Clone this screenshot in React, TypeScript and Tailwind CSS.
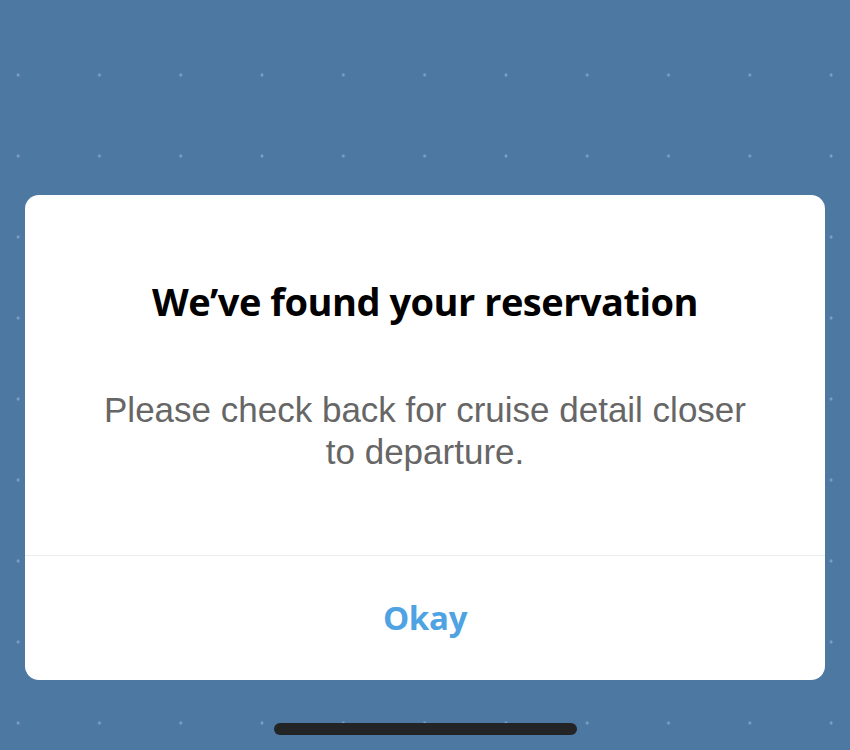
export default function App() {
  return (
    <div className="w-[850px] h-[750px] overflow-hidden bg-[#4d78a2] bg-[radial-gradient(circle,#7d9fc2_1.3px,transparent_1.8px)] bg-[length:81.3px_81px] bg-[position:-22.5px_34.5px] flex flex-col items-center pt-[195px]">
      <div className="w-[800px] h-[485px] bg-white rounded-[14px] flex flex-col overflow-hidden">
        <div className="h-[361px] flex flex-col items-center pt-[83px] border-b border-[#ececec]">
          <h1 className="font-['Open_Sans',sans-serif] font-bold text-[38px] leading-[46px] text-black tracking-[-0.5px]">
            We’ve found your reservation
          </h1>
          <p className="mt-[65px] font-['Liberation_Sans',sans-serif] text-[35px] leading-[42px] text-[#666666] text-center w-[720px]">
            Please check back for cruise detail closer
            <br />
            to departure.
          </p>
        </div>
        <button className="flex-1 flex items-center justify-center font-['Open_Sans',sans-serif] font-bold text-[33px] tracking-[-0.3px] text-[#4fa3e3]">
          Okay
        </button>
      </div>
      <div className="mt-[43px] w-[303px] h-[12px] rounded-full bg-[#232425]" />
    </div>
  );
}
